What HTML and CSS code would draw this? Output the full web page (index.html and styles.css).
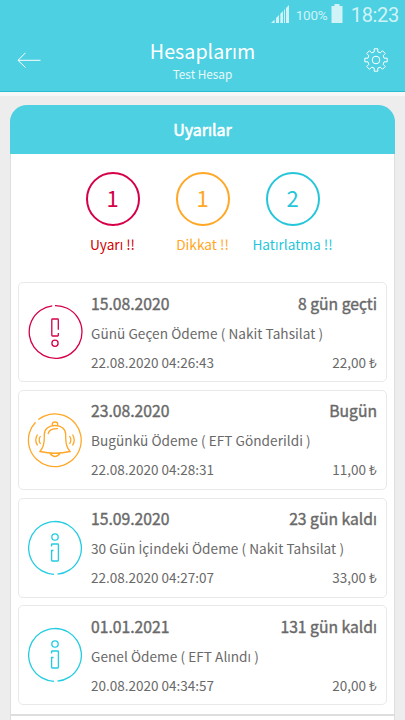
FILE: index.html
```html
<!DOCTYPE html>
<html lang="tr">
<head>
<meta charset="utf-8">
<title>Hesaplarım</title>
<link rel="stylesheet" href="styles.css">
</head>
<body>
<svg class="defs" width="0" height="0" aria-hidden="true">
  <symbol id="info" viewBox="0 0 56 56">
    <path d="M27 54.3A26.4 26.4 0 1 1 30.5 54.2"/>
    <circle cx="28" cy="17" r="3.2"/>
    <path d="M24.6 26.6V24.7Q24.6 24 25.3 24H30.7Q31.4 24 31.4 24.7V40.3Q31.4 41 30.7 41H25.3Q24.6 41 24.6 40.3V30.5H26.5"/>
  </symbol>
</svg>
<header class="top">
  <div class="status">
    <svg class="signal" viewBox="0 0 18 18"><path d="M0 18L3.6 14.4V18ZM5 13L8 10V18H5ZM9.3 8.7L12 6V18H9.3ZM13 5L14 4V18H13ZM15 3L18 0V18H15Z"/></svg>
    <span class="percent">100%</span>
    <svg class="battery" viewBox="0 0 12 19"><path d="M3.5 0H8.5V2H11.5V19H.5V2H3.5Z"/></svg>
    <span class="clock">18:23</span>
  </div>
  <div class="bar">
    <svg class="back" viewBox="0 0 24 16"><path d="M23.5 8.3H1M8.5.8L1 8.3L8.5 15.5"/></svg>
    <div class="heading"><h1>Hesaplarım</h1><p>Test Hesap</p></div>
    <svg class="gear" viewBox="0 0 24 24"><path d="M10.2.8h3.6v3.1l2.5 1 2.2-2.2 2.8 2.8-2.2 2.2 1 2.5h3.1v3.6h-3.1l-1 2.5 2.2 2.2-2.8 2.8-2.2-2.2-2.5 1v3.1h-3.6v-3.1l-2.5-1-2.2 2.2-2.8-2.8 2.2-2.2-1-2.5H.8v-3.6h3.1l1-2.5-2.2-2.2 2.8-2.8 2.2 2.2 2.5-1Z"/><circle cx="12" cy="12" r="3.8"/></svg>
  </div>
</header>
<main class="panel">
  <h2>Uyarılar</h2>
  <div class="counts">
    <div class="count red"><b>1</b><span>Uyarı !!</span></div>
    <div class="count orange"><b>1</b><span>Dikkat !!</span></div>
    <div class="count cyan"><b>2</b><span>Hatırlatma !!</span></div>
  </div>
  <div class="list">
    <article class="card">
      <svg class="icon red" viewBox="0 0 56 56"><path d="M28 1.6A26.4 26.4 0 1 1 25.3 1.8"/><circle cx="28" cy="39.2" r="3.1"/><path d="M31.3 25.7V15.7Q31.3 15 30.6 15H25.5Q24.8 15 24.8 15.7V31.2Q24.8 32 25.5 32H30.6Q31.3 32 31.3 31.2V29"/></svg>
      <div class="body">
        <div class="row strong"><span>15.08.2020</span><span>8 gün geçti</span></div>
        <div class="desc">Günü Geçen Ödeme ( Nakit Tahsilat )</div>
        <div class="row"><span>22.08.2020 04:26:43</span><span>22,00 ₺</span></div>
      </div>
    </article>
    <article class="card">
      <svg class="icon orange" viewBox="0 0 56 56"><path d="M11.3 7.6A26.4 26.4 0 1 1 8.5 10.2"/><path d="M13 39.5C16.5 35.5 17.3 32 17.3 26V22.5C17.3 17 21.5 13.5 28 13.5S38.7 17 38.7 22.5V26C38.7 32 39.5 35.5 43 39.5Q28 43 13 39.5ZM25.3 13.5V12Q25.3 10 28 10T30.7 12V13.5M22.7 41Q28 48 33.3 41"/><path d="M21 22C22 18 24.5 16.7 31 16.7M13.5 24Q10.8 28 13.5 32M10.5 22.5Q7 28 10.5 33.5M42.5 24Q45.2 28 42.5 32M45.5 22.5Q49 28 45.5 33.5"/></svg>
      <div class="body">
        <div class="row strong"><span>23.08.2020</span><span>Bugün</span></div>
        <div class="desc">Bugünkü Ödeme ( EFT Gönderildi )</div>
        <div class="row"><span>22.08.2020 04:28:31</span><span>11,00 ₺</span></div>
      </div>
    </article>
    <article class="card">
      <svg class="icon info"><use href="#info"/></svg>
      <div class="body">
        <div class="row strong"><span>15.09.2020</span><span>23 gün kaldı</span></div>
        <div class="desc">30 Gün <span class="cap">İ</span>çindeki Ödeme ( Nakit Tahsilat )</div>
        <div class="row"><span>22.08.2020 04:27:07</span><span>33,00 ₺</span></div>
      </div>
    </article>
    <article class="card">
      <svg class="icon info"><use href="#info"/></svg>
      <div class="body">
        <div class="row strong"><span>01.01.2021</span><span>131 gün kaldı</span></div>
        <div class="desc">Genel Ödeme ( EFT Alındı )</div>
        <div class="row"><span>20.08.2020 04:34:57</span><span>20,00 ₺</span></div>
      </div>
    </article>
  </div>
</main>
<div class="next"></div>
</body>
</html>
```
FILE: styles.css
```css
* { box-sizing: border-box; margin: 0; padding: 0; }
body {
  height: 720px;
  overflow: hidden;
  background: #ededed;
  color: #696969;
  font: 13.5px/20px "Noto Sans CJK SC", "Open Sans", sans-serif;
}
svg { display: block; flex: none; fill: none; stroke: currentColor; }
.defs { position: absolute; }
.top {
  height: 92px;
  background: #4dd0e1;
  border-bottom: 1px solid #26bfd2;
  color: #fff;
  box-shadow: 0 4px 0 #f7f7f7;
}
.status {
  height: 30px;
  display: flex;
  align-items: center;
  justify-content: flex-end;
  padding-right: 6px;
  color: #d0f3f8;
  font-family: Roboto, sans-serif;
}
.status svg { fill: currentColor; stroke: none; }
.status .signal { width: 18px; height: 18px; margin: -2px 7px 0 0; }
.percent { font-size: 13.5px; width: 35px; letter-spacing: -.2px; }
.status .battery { width: 12px; height: 19px; margin-top: -3px; }
.clock { font-size: 20px; margin-left: 8px; letter-spacing: -.3px; }
.bar { display: flex; align-items: center; height: 61px; padding: 0 17px; justify-content: space-between; }
.back { width: 24px; height: 16px; margin-top: -1px; }
.gear { width: 24px; height: 24px; margin-top: -1px; }
.heading { text-align: center; }
h1 { font-size: 19.7px; line-height: 24px; font-weight: 400; margin-top: 1px; }
.heading p { font-size: 11.8px; line-height: 20px; padding-top: 1px; color: #e5f8fa; }
.panel {
  height: 610px;
  margin: 13px 10px 0;
  background: #fff;
  border: 1px solid #dedede;
  border-top: 0;
  border-radius: 17px 17px 0 0;
}
h2 {
  height: 49px;
  margin: 0 -1px;
  background: #4dd0e1;
  border-radius: 17px 17px 0 0;
  color: #fff;
  font-size: 16px;
  line-height: 49px;
  font-weight: 400;
  text-align: center;
  -webkit-text-stroke: .6px currentColor;
}
.counts { display: flex; justify-content: center; padding-top: 18px; height: 128.4px; }
.count { width: 90px; display: flex; flex-direction: column; align-items: center; white-space: nowrap; }
.count b {
  width: 54px; height: 54px;
  border: 2px solid;
  border-radius: 50%;
  font-size: 22px; line-height: 47px; font-weight: 400;
  text-align: center;
}
.count span { margin-top: 8px; font-size: 13.7px; }
.red { color: #d50048; }
.red span { color: #d00000; }
.orange { color: #ffa726; }
.cyan { color: #26c6da; }
.info { color: #22cce2; }
.list { display: grid; gap: 7.6px; padding: 0 7px; }
.card {
  height: 100px;
  display: flex;
  align-items: center;
  border: 1px solid #e9e9e9;
  border-radius: 5px;
  padding: 0 9px 0 8px;
}
.icon { width: 56px; height: 56px; stroke-width: 1.3; margin-right: 8px; }
.body { flex: 1; padding-bottom: 1px; }
.row { display: flex; justify-content: space-between; }
.strong { font-size: 15.7px; line-height: 24px; -webkit-text-stroke: .4px currentColor; }
.desc { margin: 7px 0 9px; font-size: 13.6px; letter-spacing: .05px; }
.cap { font-family: "Open Sans", sans-serif; font-size: 13.8px; line-height: 1; }
.next { height: 5px; margin: 0 10px; background: #fff; border: 1px solid #dedede; border-width: 1px 1px 0; }
```
